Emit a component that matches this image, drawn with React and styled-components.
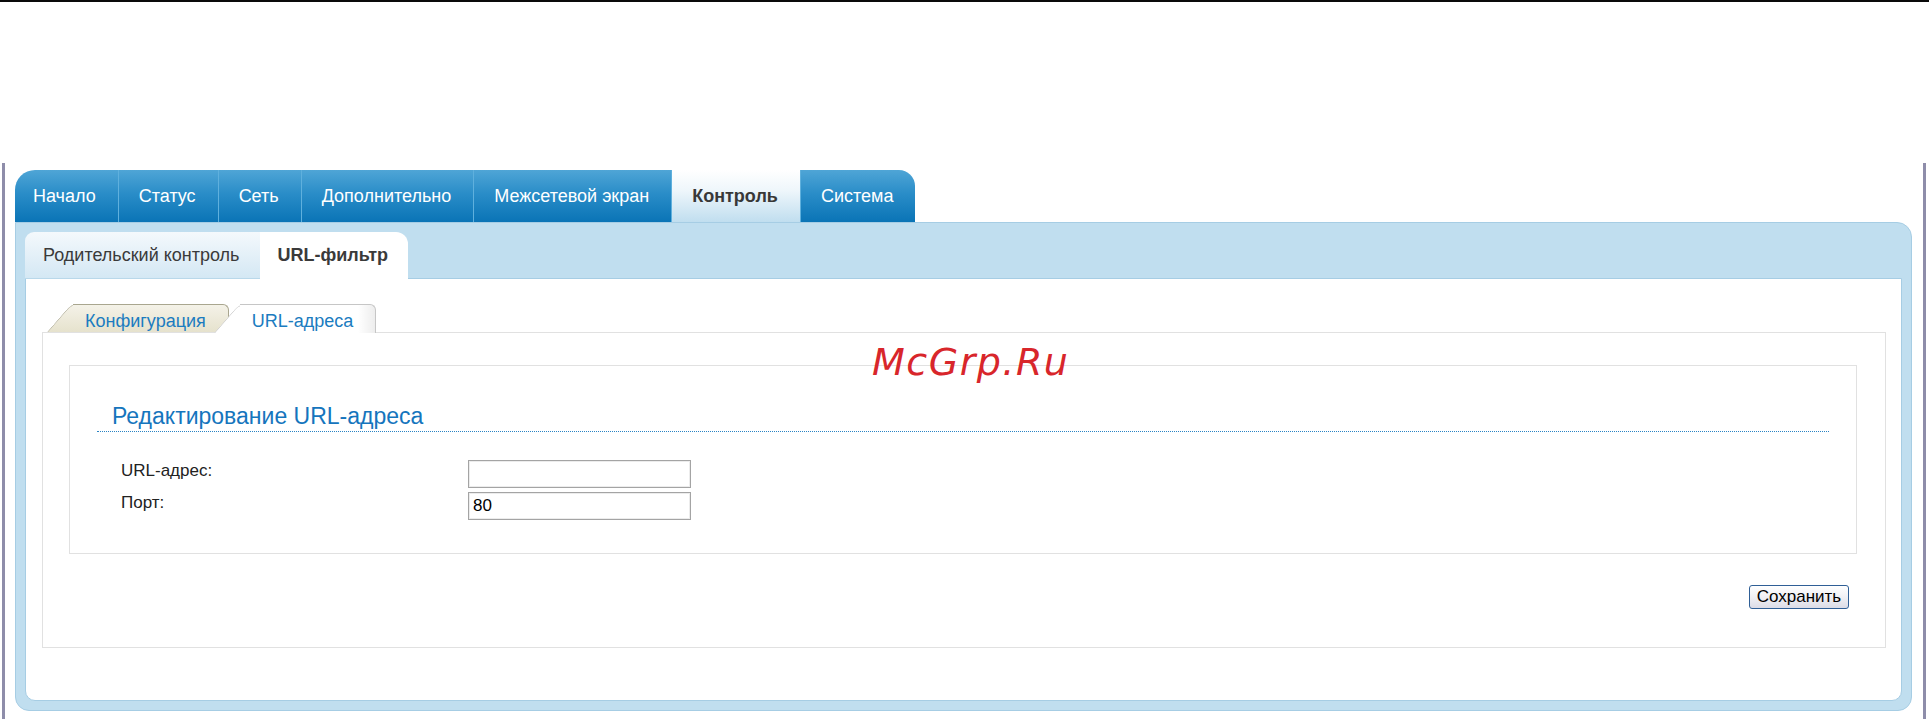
import React from 'react'
import styled, { createGlobalStyle } from 'styled-components'

const GlobalStyle = createGlobalStyle`
  html, body {
    margin: 0;
    padding: 0;
    background: #fff;
  }
  body {
    font-family: "Liberation Sans", Arial, sans-serif;
  }
`

const Page = styled.div`
  position: relative;
  min-height: 100vh;
  box-sizing: border-box;
  border-top: 2px solid #0a0a0a;
  overflow: hidden;
`

const Shell = styled.div`
  margin: 161px 3px 0 2px;
  min-height: calc(100vh - 163px);
  box-sizing: border-box;
  padding: 7px 11px 0 10px;
  border-left: 3px solid #8e8daa;
  border-right: 3px solid #8e8daa;
`

const TopTabs = styled.div`
  display: flex;
  height: 52px;
`

const TopTab = styled.div`
  height: 52px;
  line-height: 52px;
  padding: 0 22px 0 20px;
  border-left: 1px solid #5fb0dd;
  font-size: 18px;
  white-space: nowrap;
  color: ${p => (p.$active ? '#383838' : '#fff')};
  font-weight: ${p => (p.$active ? 'bold' : 'normal')};
  background: ${p =>
    p.$active
      ? 'linear-gradient(#ffffff 0%, #eef6fb 40%, #c0deef 100%)'
      : 'linear-gradient(#4fa5d6 0%, #2a8dc8 45%, #0a74b6 100%)'};

  &:first-child {
    border-left: none;
    padding-left: 18px;
    border-top-left-radius: 20px;
  }
  &:last-child {
    border-top-right-radius: 16px;
  }
`

const Frame = styled.div`
  background: #c0deef;
  border: 1px solid #a6cde4;
  border-radius: 0 15px 14px 14px;
  padding: 9px;
`

const SubTabs = styled.div`
  position: relative;
  z-index: 1;
  display: flex;
  height: 47px;
  margin-bottom: -1px;
`

const SubTab = styled.div`
  height: 47px;
  line-height: 47px;
  padding: 0 20px 0 18px;
  font-size: 18px;
  white-space: nowrap;
  color: #3a3a3a;
  font-weight: ${p => (p.$active ? 'bold' : 'normal')};
  background: ${p =>
    p.$active ? '#fff' : 'linear-gradient(#f4f9fc 0%, #e4f0f8 50%, #d4e8f4 100%)'};
  box-sizing: border-box;
  border-bottom: ${p => (p.$active ? 'none' : '1px solid #b9d8ea')};

  &:first-child {
    border-top-left-radius: 9px;
  }
  &:last-child {
    border-top-right-radius: 12px;
  }
`

const Content = styled.div`
  background: #fff;
  border: 1px solid #a6cde4;
  border-radius: 0 0 10px 10px;
  padding: 25px 15px 52px 16px;
`

const FolderTabs = styled.div`
  position: relative;
  z-index: 1;
  display: flex;
  align-items: flex-start;
  height: 29px;
  padding-left: 5px;
  margin-bottom: -1px;
`

const FolderTab = styled.div`
  position: relative;
  z-index: ${p => (p.$active ? 2 : 1)};
  height: ${p => (p.$active ? '29px' : '28px')};
  box-sizing: border-box;
  margin-left: ${p => (p.$first ? '0' : '-15px')};
  padding: 8px 23px 0 38px;
  font-size: 18px;
  line-height: 18px;
  white-space: nowrap;
  color: #1b7cc0;

  &::before {
    content: '';
    position: absolute;
    left: 0;
    top: 0;
    bottom: 0;
    width: 40px;
    box-sizing: border-box;
    background: ${p => (p.$active ? '#fff' : 'linear-gradient(#f4f2e8, #e6e2cd)')};
    border: 1px solid ${p => (p.$active ? '#c6c6c6' : '#a9a68f')};
    border-right: none;
    border-bottom: none;
    border-top-left-radius: 6px;
    transform: skewX(-41deg);
    transform-origin: bottom left;
  }

  &::after {
    content: '';
    position: absolute;
    left: 26px;
    right: 0;
    top: 0;
    bottom: 0;
    box-sizing: border-box;
    background: ${p =>
      p.$active
        ? 'linear-gradient(to right, #fff calc(100% - 17px), #ededed)'
        : 'linear-gradient(#f4f2e8, #e6e2cd)'};
    border: 1px solid ${p => (p.$active ? '#c6c6c6' : '#a9a68f')};
    border-left: none;
    border-bottom: none;
    border-top-right-radius: 6px;
  }

  span {
    position: relative;
    z-index: 1;
  }
`

const Panel = styled.div`
  border: 1px solid #e1e1e1;
  padding: 32px 28px 38px 26px;
  background: #fff;
`

const Section = styled.div`
  border: 1px solid #e1e1e1;
  padding: 0 27px 33px 27px;
`

const Heading = styled.h2`
  margin: 37px 0 0;
  padding: 0 0 2px 15px;
  font-size: 23px;
  line-height: 26px;
  font-weight: normal;
  color: #1575bd;
  border-bottom: 1px dotted #2a84c4;
`

const Form = styled.div`
  display: grid;
  grid-template-columns: 347px 223px;
  row-gap: 4px;
  margin-top: 28px;
  padding-left: 24px;
`

const Label = styled.div`
  font-size: 17px;
  line-height: 22px;
  color: #222;
`

const Input = styled.input`
  width: 223px;
  height: 28px;
  box-sizing: border-box;
  margin: 0;
  padding: 0 4px;
  border: 1px solid #a4a4a4;
  box-shadow: inset 0 0 0 1px #ececec;
  font-family: "Liberation Sans", Arial, sans-serif;
  font-size: 17px;
  color: #000;
  outline: none;
`

const Actions = styled.div`
  display: flex;
  justify-content: flex-end;
  margin-top: 31px;
  padding-right: 8px;
`

const Button = styled.button`
  width: 100px;
  height: 24px;
  padding: 0;
  border: 1px solid #2f5f96;
  border-radius: 3px;
  background: linear-gradient(#ffffff, #f0f0f4 50%, #dcdce6);
  font-family: "Liberation Sans", Arial, sans-serif;
  font-size: 17px;
  color: #000;
`

const Watermark = styled.div`
  position: absolute;
  left: 872px;
  top: 341px;
  font-family: "DejaVu Sans", sans-serif;
  font-style: italic;
  font-size: 38px;
  line-height: 38px;
  letter-spacing: 1.5px;
  color: #d8262b;
  pointer-events: none;
`

const topTabs = ['Начало', 'Статус', 'Сеть', 'Дополнительно', 'Межсетевой экран', 'Контроль', 'Система']

export default function App() {
  return (
    <Page>
      <GlobalStyle />
      <Shell>
        <TopTabs>
          {topTabs.map(t => (
            <TopTab key={t} $active={t === 'Контроль'}>
              {t}
            </TopTab>
          ))}
        </TopTabs>
        <Frame>
          <SubTabs>
            <SubTab>Родительский контроль</SubTab>
            <SubTab $active>URL-фильтр</SubTab>
          </SubTabs>
          <Content>
            <FolderTabs>
              <FolderTab $first>
                <span>Конфигурация</span>
              </FolderTab>
              <FolderTab $active>
                <span>URL-адреса</span>
              </FolderTab>
            </FolderTabs>
            <Panel>
              <Section>
                <Heading>Редактирование URL-адреса</Heading>
                <Form>
                  <Label>URL-адрес:</Label>
                  <Input defaultValue="" />
                  <Label>Порт:</Label>
                  <Input defaultValue="80" />
                </Form>
              </Section>
              <Actions>
                <Button>Сохранить</Button>
              </Actions>
            </Panel>
          </Content>
        </Frame>
      </Shell>
      <Watermark>McGrp.Ru</Watermark>
    </Page>
  )
}
